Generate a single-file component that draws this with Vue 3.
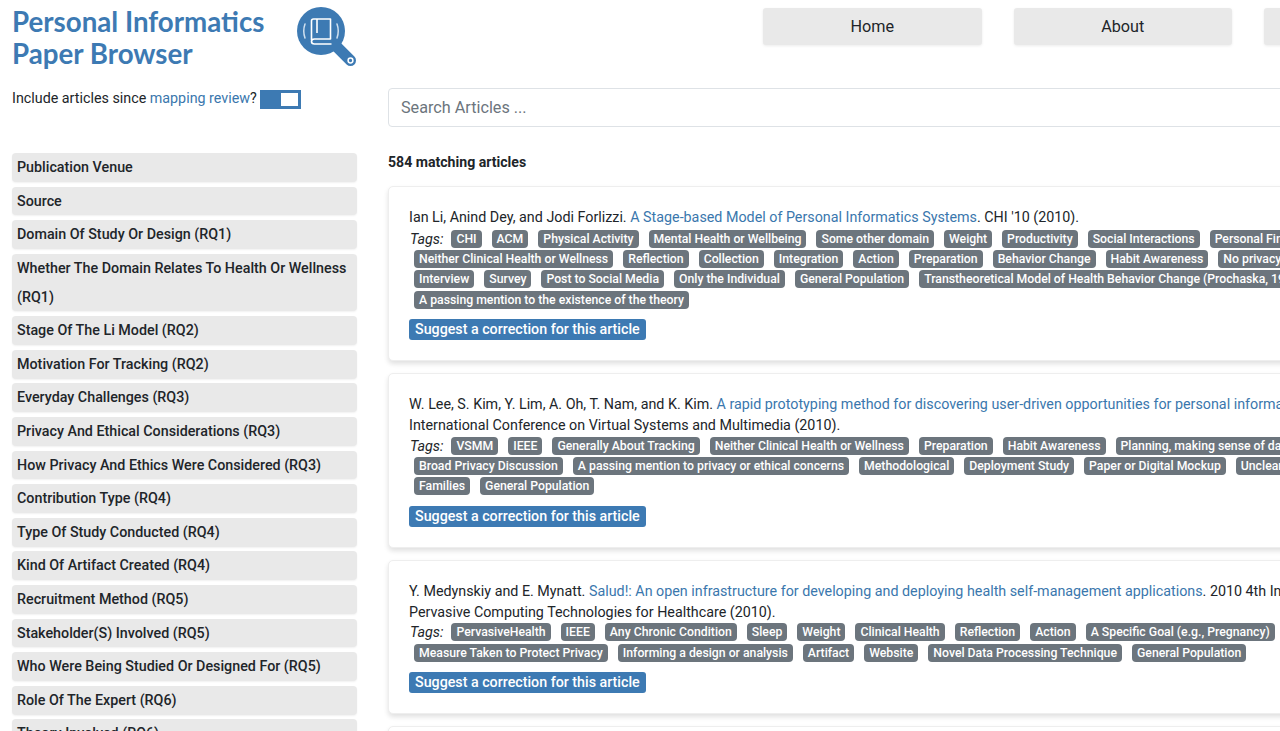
<script setup>
const filters = [
  'Publication Venue', 'Source', 'Domain Of Study Or Design (RQ1)',
  'Whether The Domain Relates To Health Or Wellness (RQ1)', 'Stage Of The Li Model (RQ2)',
  'Motivation For Tracking (RQ2)', 'Everyday Challenges (RQ3)', 'Privacy And Ethical Considerations (RQ3)',
  'How Privacy And Ethics Were Considered (RQ3)', 'Contribution Type (RQ4)', 'Type Of Study Conducted (RQ4)',
  'Kind Of Artifact Created (RQ4)', 'Recruitment Method (RQ5)', 'Stakeholder(S) Involved (RQ5)',
  'Who Were Being Studied Or Designed For (RQ5)', 'Role Of The Expert (RQ6)', 'Theory Involved (RQ6)'
]
const articles = [
  {
    authors: 'Ian Li, Anind Dey, and Jodi Forlizzi. ',
    title: 'A Stage-based Model of Personal Informatics Systems',
    rest: ". CHI '10 (2010).",
    second: '',
    rows: [
      ['CHI', 'ACM', 'Physical Activity', 'Mental Health or Wellbeing', 'Some other domain', 'Weight', 'Productivity', 'Social Interactions', 'Personal Finance'],
      ['Neither Clinical Health or Wellness', 'Reflection', 'Collection', 'Integration', 'Action', 'Preparation', 'Behavior Change', 'Habit Awareness', 'No privacy discussion'],
      ['Interview', 'Survey', 'Post to Social Media', 'Only the Individual', 'General Population', 'Transtheoretical Model of Health Behavior Change (Prochaska, 1997)'],
      ['A passing mention to the existence of the theory']
    ]
  },
  {
    authors: 'W. Lee, S. Kim, Y. Lim, A. Oh, T. Nam, and K. Kim. ',
    title: 'A rapid prototyping method for discovering user-driven opportunities for personal informatics',
    rest: '. 2010 16th',
    second: 'International Conference on Virtual Systems and Multimedia (2010).',
    rows: [
      ['VSMM', 'IEEE', 'Generally About Tracking', 'Neither Clinical Health or Wellness', 'Preparation', 'Habit Awareness', 'Planning, making sense of data'],
      ['Broad Privacy Discussion', 'A passing mention to privacy or ethical concerns', 'Methodological', 'Deployment Study', 'Paper or Digital Mockup', 'Unclear'],
      ['Families', 'General Population']
    ]
  },
  {
    authors: 'Y. Medynskiy and E. Mynatt. ',
    title: 'Salud!: An open infrastructure for developing and deploying health self-management applications',
    rest: '. 2010 4th International Conference on',
    second: 'Pervasive Computing Technologies for Healthcare (2010).',
    rows: [
      ['PervasiveHealth', 'IEEE', 'Any Chronic Condition', 'Sleep', 'Weight', 'Clinical Health', 'Reflection', 'Action', 'A Specific Goal (e.g., Pregnancy)'],
      ['Measure Taken to Protect Privacy', 'Informing a design or analysis', 'Artifact', 'Website', 'Novel Data Processing Technique', 'General Population']
    ]
  }
]
</script>

<template>
  <div class="page">
    <aside class="left">
      <div class="brand">
        <h1 class="title">Personal Informatics<br>Paper Browser</h1>
        <svg class="logo" width="61" height="70" viewBox="0 0 61 70" aria-hidden="true">
          <path d="M41 47 L54.5 60.5" stroke="#3d7ab3" stroke-width="11" stroke-linecap="round" />
          <circle cx="54.5" cy="60.5" r="2.4" fill="none" stroke="#fff" stroke-width="1.5" />
          <circle cx="25" cy="31" r="24" fill="#3d7ab3" />
          <path d="M9 24 Q6.5 31 9 38 M41 24 Q43.5 31 41 38" fill="none" stroke="#cfe0ef" stroke-width="1.5" stroke-linecap="round" />
          <path d="M15.5 40 V21 Q15.5 19 17.5 19 H34.5 V39 H18.5 Q15.5 39 15.5 41.5 Q15.5 44 18.5 44 H35.5 M21 19 V33" fill="none" stroke="#fff" stroke-width="1.6" stroke-linejoin="round" />
        </svg>
      </div>
      <div class="since">
        <span class="since-text">Include articles since <a class="link">mapping review</a>?</span>
        <span class="toggle"><span class="knob"></span></span>
      </div>
      <ul class="filters">
        <li v-for="f in filters" :key="f" class="filter">{{ f }}</li>
      </ul>
    </aside>

    <main class="main">
      <nav class="nav">
        <a class="nav-btn">Home</a>
        <a class="nav-btn">About</a>
        <a class="nav-btn">Submit</a>
      </nav>
      <div class="search">Search Articles ...</div>
      <div class="count">584 matching articles</div>
      <article v-for="a in articles" :key="a.title" class="card">
        <div class="cite">{{ a.authors }}<a class="link">{{ a.title }}</a>{{ a.rest }}</div>
        <div v-if="a.second" class="cite second">{{ a.second }}</div>
        <div class="tags">
          <div v-for="(row, i) in a.rows" :key="i" class="tag-row">
            <em v-if="i === 0" class="tags-label">Tags:</em>
            <span v-for="t in row" :key="t" class="badge">{{ t }}</span>
          </div>
        </div>
        <button class="suggest">Suggest a correction for this article</button>
      </article>
      <article class="card"></article>
    </main>
  </div>
</template>

<style>
html, body { margin: 0; overflow: hidden; background: #fff; }
</style>

<style scoped>
.page {
  display: flex;
  width: 1280px;
  height: 731px;
  overflow: hidden;
  font-family: Roboto, "Liberation Sans", sans-serif;
  font-size: 14.3px;
  color: #212529;
}
.left {
  flex: 0 0 345px;
  min-width: 0;
  margin-left: 12px;
}
.brand { display: flex; height: 71px; padding-top: 5.5px; box-sizing: border-box; }
.title {
  margin: 0;
  width: 284px;
  flex: none;
  font-family: Lato, sans-serif;
  font-weight: 700;
  font-size: 27.7px;
  line-height: 32.5px;
  color: #3d7ab3;
  white-space: nowrap;
}
.logo { flex: none; margin-top: -5.5px; }
.since {
  display: flex;
  align-items: center;
  gap: 3px;
  height: 20px;
  margin-top: 18px;
}
.since-text { line-height: 19px; margin-top: -1px; }
.link { color: #3a77ad; }
.toggle {
  display: flex;
  justify-content: flex-end;
  align-items: center;
  width: 41px;
  height: 19px;
  padding: 0 3px;
  box-sizing: border-box;
  background: #3d7ab3;
}
.knob { width: 17px; height: 13px; background: #fff; }
.filters { list-style: none; margin: 44px 0 0; padding: 0; }
.filter {
  padding: 0 5px;
  margin-bottom: 4.8px;
  background: #e9e9e9;
  border-radius: 4px;
  font-weight: 500;
  line-height: 28.8px;
  box-shadow: 0 1px 2px rgba(0, 0, 0, .06);
}
.main {
  flex: none;
  width: 1500px;
  margin-left: 31px;
}
.nav {
  display: flex;
  gap: 32px;
  height: 37px;
  margin: 8px 0 0 375px;
}
.nav-btn {
  flex: 0 0 218.5px;
  display: flex;
  align-items: center;
  justify-content: center;
  background: #e9e9e9;
  border-radius: 3px;
  font-size: 16.2px;
  box-shadow: 0 1px 3px rgba(0, 0, 0, .08);
}
.search {
  height: 37px;
  margin-top: 43px;
  padding-left: 12px;
  border: 1px solid #dee2e6;
  border-radius: 4px;
  font-size: 16.2px;
  line-height: 38px;
  color: #6c757d;
}
.count {
  margin-top: 25px;
  margin-bottom: 13px;
  font-size: 14.1px;
  font-weight: 700;
  line-height: 21px;
}
.card {
  margin: 0 0 12px;
  padding: 20px;
  border: 1px solid #eee;
  border-radius: 5px;
  box-shadow: 0 3px 5px rgba(0, 0, 0, .12);
  background: #fff;
}
.cite { line-height: 21px; white-space: nowrap; }
.second { line-height: 20px; }
.tags { padding-top: 0.6px; }
.tag-row { height: 20.4px; white-space: nowrap; line-height: 20.4px; }
.tags-label { margin-left: 1px; margin-right: 3px; }
.badge {
  display: inline-block;
  margin: 0 5px;
  padding: 0 5px;
  height: 18px;
  line-height: 18px;
  background: #6c757d;
  border-radius: 4px;
  color: #fff;
  font-size: 12.25px;
  font-weight: 500;
  vertical-align: 1px;
}
.suggest {
  display: block;
  height: 21px;
  margin-top: 8.8px;
  padding: 0 6px;
  border: 0;
  border-radius: 3px;
  background: #3d7ab3;
  color: #fff;
  font-family: inherit;
  font-size: 14.25px;
  font-weight: 500;
}
</style>
